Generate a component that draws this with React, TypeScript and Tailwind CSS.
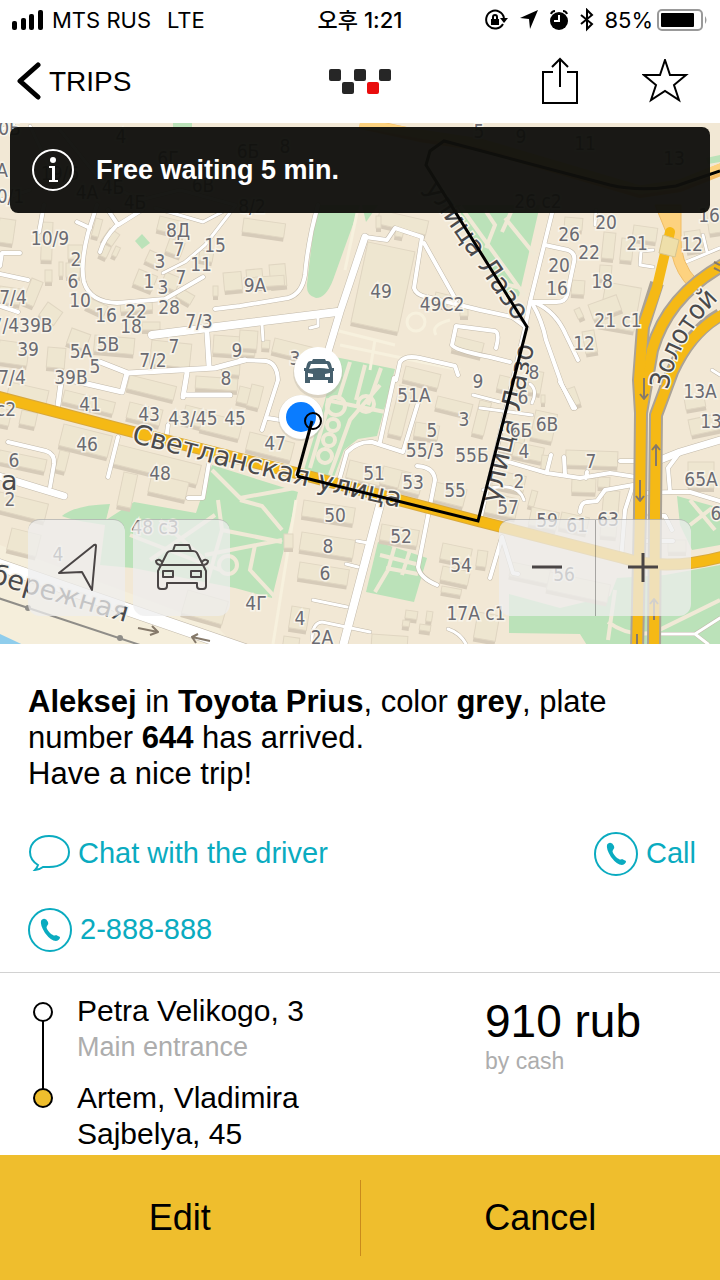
import type { ReactNode } from "react";

type Building = [x: number, y: number, w: number, h: number, angle: number];
type Road = [d: string, width: number];
type Label = [text: string, x: number, y: number];

const BUILDINGS: Building[] = [
  [0, 218, 16, 24, 8], [42, 222, 11, 38, 2], [68, 245, 16, 14, 0], [66, 263, 14, 14, 0],
  [32, 278, 12, 26, 22], [45, 270, 7, 12, 0], [59, 262, 4, 14, 0], [48, 302, 18, 16, 35],
  [0, 286, 22, 16, 8], [0, 340, 30, 22, 8], [48, 347, 18, 20, 5], [72, 328, 20, 16, 20],
  [95, 335, 40, 16, 5], [142, 322, 18, 8, 0], [110, 228, 12, 14, 35], [96, 218, 7, 18, 15],
  [104, 244, 8, 12, 25], [116, 246, 5, 10, 25], [160, 216, 28, 14, 14], [170, 238, 16, 14, 20],
  [150, 250, 16, 12, 25], [139, 269, 20, 16, 22], [166, 272, 16, 14, 22], [181, 288, 16, 10, 30],
  [120, 302, 32, 10, -4], [90, 298, 20, 10, 25], [200, 250, 14, 10, 10], [213, 286, 5, 10, 0],
  [223, 273, 18, 18, -5], [244, 218, 42, 14, 8], [246, 270, 16, 18, -5], [269, 265, 16, 22, -5],
  [244, 278, 40, 10, -4], [152, 340, 40, 24, 6], [214, 335, 42, 18, 4], [222, 364, 18, 10, 4],
  [275, 338, 50, 14, 14], [240, 330, 18, 18, 4], [262, 340, 8, 8, 4], [368, 242, 48, 82, 12],
  [380, 210, 50, 14, 13], [376, 216, 5, 12, 0], [396, 228, 8, 8, 10], [436, 292, 14, 12, 14],
  [460, 308, 8, 8, 0], [10, 382, 40, 14, 13], [65, 390, 52, 12, 14], [64, 424, 50, 22, 14],
  [60, 450, 10, 20, 14], [0, 450, 48, 12, 12], [22, 410, 16, 14, 12], [0, 408, 12, 16, 12],
  [0, 492, 50, 18, 14], [12, 528, 30, 22, 14], [116, 444, 88, 20, 14], [124, 472, 14, 34, 12],
  [152, 474, 38, 18, 13], [130, 375, 48, 14, 14], [130, 402, 34, 16, 14], [186, 405, 24, 18, 14],
  [204, 412, 40, 18, 14], [196, 376, 42, 12, 4], [240, 386, 18, 16, 14], [250, 432, 46, 18, 14],
  [252, 384, 12, 22, 14], [400, 385, 14, 50, 14], [406, 366, 36, 14, 14], [350, 460, 36, 18, 14],
  [384, 466, 28, 18, 14], [402, 472, 22, 18, 14], [436, 482, 32, 18, 14], [438, 396, 36, 12, 14],
  [416, 422, 24, 14, 10], [304, 500, 52, 16, 9], [302, 532, 54, 18, 9], [300, 562, 50, 16, 9],
  [292, 606, 18, 22, 9], [284, 534, 9, 14, 0], [382, 524, 38, 16, 10], [443, 543, 30, 16, 12],
  [443, 566, 28, 14, 12], [442, 586, 20, 6, 10], [406, 610, 12, 8, 8], [427, 611, 6, 10, 8],
  [403, 620, 7, 6, 8], [420, 624, 11, 6, 8], [372, 634, 36, 14, 4], [284, 636, 16, 14, 8],
  [565, 217, 18, 12, 5], [634, 225, 24, 14, 8], [604, 232, 12, 26, 6], [622, 238, 12, 22, 6],
  [600, 265, 12, 14, 4], [572, 280, 13, 14, 4], [606, 282, 36, 44, 10], [588, 305, 30, 16, -20],
  [574, 310, 6, 10, -25], [582, 332, 12, 22, -10], [684, 232, 16, 20, -8], [706, 210, 14, 24, -8],
  [536, 410, 22, 28, 12], [500, 430, 26, 20, 12], [515, 442, 30, 14, 12], [542, 455, 8, 14, 5],
  [495, 470, 32, 16, 12], [566, 450, 52, 15, 2], [572, 478, 24, 14, 2], [598, 477, 12, 10, 2],
  [532, 490, 6, 16, 15], [486, 492, 34, 20, 12], [532, 507, 28, 18, 12], [562, 512, 28, 16, 12],
  [604, 490, 16, 46, 5], [688, 462, 26, 26, 0], [684, 398, 20, 12, -10], [688, 420, 32, 16, -12],
  [478, 550, 10, 16, 8], [512, 562, 40, 14, 12], [550, 572, 62, 18, 12], [565, 390, 10, 18, -20],
  [500, 375, 20, 14, 14], [530, 370, 14, 22, 10], [478, 612, 22, 26, 10], [188, 590, 42, 24, 16],
  [541, 395, 4, 8, 0], [668, 540, 18, 12, 0], [455, 336, 30, 14, 14], [480, 400, 12, 34, 14],
];

const ROADS: Road[] = [
  ["M97 205L88 233Q80 265 84 282Q90 302 117 303L165 299L203 277", 4],
  ["M108 210L118 225L142 210M116 226Q104 238 100 252M77 222L90 228", 4],
  ["M155 208L203 222L222 212M236 205L205 245L185 262L163 273", 3],
  ["M44 205L39 232M0 274L28 280M20 253L2 253L0 266M0 306L18 312", 4],
  ["M0 130L14 124M30 126L60 190M60 130L100 180L140 200L180 190L235 205M0 200L30 190", 3],
  ["M152 335L240 324L337 312", 8],
  ["M215 309L240 306L288 298Q302 294 305 275Q308 240 318 205", 4],
  ["M365 237L340 312L328 352", 7],
  ["M365 237L387 240L395 228L422 237L414 288Q416 295 427 297L480 310L512 317L527 328M424 243L456 300", 4],
  ["M318 314L318 326L310 328M262 324L263 340", 3],
  ["M554 205L530 302L525 328L480 520", 4],
  ["M545 245L568 250Q576 253 574 262L567 295Q565 303 554 302L532 302", 4],
  ["M532 303Q542 320 546 340L562 385L573 408M536 303Q556 312 566 335L578 360", 4],
  ["M596 210L595 225M653 250L641 251L640 265L653 267M703 235L707 252M686 262L720 248M712 370L720 375", 3],
  ["M100 362L128 373L215 368L245 360M207 333L209 366M62 375L58 405M127 373L122 392L70 380M187 373L183 397M187 395L230 395", 5],
  ["M240 360L266 361Q277 363 278 380L262 430M268 418L280 420", 4],
  ["M396 380L400 362Q405 355 420 358L455 366L458 375M452 345L456 326L495 331Q500 333 496 348M452 345Q454 350 490 357L510 362", 4],
  ["M394 378L380 442M340 477L347 452Q358 441 372 442L403 452L418 403", 4],
  ["M417 466Q434 467 435 480L418 567Q420 578 437 585", 4],
  ["M380 505L343 646", 8],
  ["M313 600L347 607M312 640Q312 623 322 622L370 632M357 541L368 543M346 564L358 567M448 629Q460 633 466 644", 3],
  ["M8 442L46 451Q55 454 54 464L50 487M118 437L108 477M209 463L203 498L188 498M168 425L166 440", 4],
  ["M-5 475L64 496", 7],
  ["M495 458L547 473L580 478L610 473L636 477M551 455L547 471M564 457L565 474M586 478L587 472", 4],
  ["M580 512Q581 501 588 502L597 501L605 490L633 485L625 510L621 560", 4],
  ["M483 490Q518 480 524 500M480 408L532 415M530 384Q538 390 532 403M473 395L500 402", 3],
  ["M502 537L513 573L518 574M502 537L490 578M560 382L575 408", 4],
  ["M655 462L680 452L720 440", 7],
  ["M620 461L638 461M680 452L668 468L670 492L690 492L720 501M645 493L672 492M650 515L665 516L672 530M640 541L673 541", 4],
  ["M655 634L695 634L720 618M695 634L708 644", 3],
  ["M-10 562L245 650", 12],
];

const LABELS: Label[] = [
  ["10/9", 50, 245], ["8Д", 178, 237], ["7", 179, 256], ["15", 215, 252], ["3", 160, 268],
  ["11", 201, 271], ["7", 181, 284], ["1", 149, 288], ["3", 163, 294], ["2", 76, 266], ["6", 73, 288],
  ["10", 80, 307], ["16", 106, 322], ["22", 136, 318], ["18", 131, 333], ["28", 169, 314],
  ["7/3", 199, 328], ["7/4", 13, 304], ["7/439В", 22, 332], ["39", 28, 356], ["5А", 81, 358],
  ["5В", 108, 351], ["5", 95, 373], ["7", 174, 353], ["7/2", 153, 367], ["9", 237, 357],
  ["7/4", 12, 384], ["39В", 71, 384], ["8", 226, 385], ["9А", 255, 292], ["49", 381, 298],
  ["49С2", 442, 311], ["3", 295, 365], ["26", 569, 241], ["20", 606, 229], ["22", 589, 259],
  ["20", 559, 272], ["16", 557, 295], ["18", 602, 288], ["21", 637, 250], ["12", 692, 251],
  ["16", 709, 222], ["21 с1", 618, 327], ["12", 584, 350], ["8", 534, 379], ["13А", 700, 398],
  ["13", 711, 428], ["9", 478, 388], ["41", 90, 411], ["43", 149, 421], ["43/45", 193, 425],
  ["45", 235, 425], ["46", 87, 451], ["47", 275, 450], ["48", 160, 480], ["с2", 6, 416], ["6", 14, 467],
  ["2", 10, 506], ["51А", 414, 402], ["5", 432, 437], ["3", 464, 426], ["55/3", 425, 457],
  ["55Б", 472, 462], ["51", 374, 480], ["53", 413, 489], ["55", 455, 497], ["50", 335, 522],
  ["8", 328, 553], ["6", 325, 580], ["4Г", 256, 610], ["4", 300, 625], ["2А", 322, 644],
  ["52", 401, 543], ["54", 461, 572], ["17А с1", 476, 620], ["6", 523, 404], ["6Б", 521, 437],
  ["6В", 547, 431], ["4", 524, 458], ["2", 519, 488], ["57", 508, 514], ["7", 591, 468],
  ["65А", 701, 486], ["6", 716, 520], ["59", 547, 527], ["61", 577, 532], ["63", 608, 526],
  ["56", 564, 581], ["48 с3", 155, 534], ["4", 58, 561], ["4", 121, 143], ["6Г", 168, 165],
  ["6Б", 248, 158], ["8", 285, 153], ["19/6", 60, 180], ["4А", 87, 199], ["4Б", 113, 194],
  ["4Б", 135, 209], ["6В", 203, 192], ["8/2", 252, 213], ["5", 479, 138], ["9", 521, 143],
  ["11", 585, 150], ["13", 674, 165], ["26 с2", 538, 208], ["10Б", 4, 135], ["А", 2, 177], ["10/1", 5, 203],
];

const HALO = { paintOrder: "stroke" as const, stroke: "#f8f4ea", strokeWidth: 3 };

function CityMap() {
  return (
    <svg
      viewBox="0 123 720 521"
      preserveAspectRatio="xMidYMid slice"
      className="block h-[521px] w-full"
      role="img"
      aria-label="Route map"
    >
      <defs>
        <path id="svetlanskaya" d="M131 442Q260 477 420 512" />
        <path id="lazo-top" d="M424 188L530 343" />
        <path id="lazo-low" d="M499 504L540 320" />
        <path id="zolotoy" d="M668 390Q680 328 735 285" />
        <path id="naberezhnaya" d="M-46 572L160 632" />
      </defs>
      <rect y="123" width="720" height="521" fill="#f2e8d5" />

      <path d="M0 545L215 625L240 650H0Z" fill="#f5eedb" />
      <path d="M0 634L34 650H0Z" fill="#8fcdec" />

      {/* parks */}
      <g fill="#bbe2b9">
        <path d="M317 205H360L333 280Q326 298 316 298Q306 296 307 284Q312 240 317 205Z" />
        <path d="M362 205H378L366 222Z" />
        <path d="M440 205H540L519 296Q510 300 502 285L458 212Z" />
        <path d="M142 234L150 243L142 249L135 241Z" />
        <path d="M335 357L395 369L377 436L358 439L344 450L334 477L304 470L325 400Z" />
        <path d="M62 516Q75 505 110 504L106 520L134 502L196 513L212 465L298 492L272 598L235 588L133 568L100 565L105 525Q70 520 62 516Z" />
        <path d="M378 542L427 558L414 602L366 592Z" />
        <path d="M509 594L560 608L610 596L617 578L665 575L720 565V650H590L580 634L509 633Z" />
        <path d="M677 496L720 508V545L692 550L680 525Z" />
        <path d="M173 123H192V128H173ZM706 158L720 155V162L708 164Z" />
        <path d="M534 431L544 430V440ZM0 562L30 572L0 568Z" />
      </g>
      <g fill="none" stroke="#f0e9d6" strokeWidth="4">
        <path d="M458 212L490 280L520 288M485 210L495 225L486 248M505 218L535 255M460 206L525 296M512 210L502 232" />
        <path d="M326 400L395 414M350 362L338 400M365 365L356 400M381 368L368 405M310 468L330 400M330 475L350 420L380 385" />
        <path d="M212 470L240 498L295 488M218 500L222 530L282 542M222 530L205 590M240 500L262 506L282 530M205 555L282 540M255 545L250 570L275 597M130 535L220 570M150 560L215 515M160 520L205 560" />
        <path d="M395 545L388 570L375 592M386 568L418 574M410 550L402 575M380 555L420 565" />
        <path d="M608 622Q630 638 655 632L720 600M615 590L608 640M690 500L715 530M712 508L690 525" />
        <circle cx="336" cy="406" r="9" />
        <circle cx="366" cy="404" r="8" />
        <circle cx="333" cy="425" r="6" />
        <circle cx="329" cy="440" r="6" />
        <circle cx="325" cy="456" r="7" />
        <circle cx="228" cy="565" r="9" />
      </g>
      <g fill="none" stroke="#f7f1de" strokeWidth="3">
        <path d="M357 213L345 270M335 330L395 345M375 340L370 370M296 500L273 644M340 345L460 370" />
        <circle cx="416" cy="322" r="9" />
        <path d="M450 320Q430 325 436 335" />
      </g>

      {BUILDINGS.map(([x, y, w, h, angle], i) => (
        <g key={i} transform={`rotate(${angle} ${x} ${y})`}>
          <rect x={x} y={y + 4} width={w} height={h} fill="#d6cbb9" />
          <rect x={x} y={y} width={w} height={h} fill="#eee6d0" stroke="#e0d6c2" />
        </g>
      ))}

      {/* streets, casing first so that crossings stay open */}
      <g fill="none" strokeLinecap="round" strokeLinejoin="round">
        {ROADS.map(([d, width]) => (
          <path key={d} d={d} stroke="#c2b9aa" strokeWidth={width + 1} />
        ))}
        {ROADS.map(([d, width]) => (
          <path key={d} d={d} stroke="#fff" strokeWidth={width} />
        ))}
      </g>
      <path d="M-5 597L140 645" stroke="#8f8d88" strokeWidth="2" />
      <g fill="#8f8d88">
        <circle cx="28" cy="608" r="3" />
        <circle cx="120" cy="638" r="3" />
      </g>

      {/* highways */}
      <g fill="none" strokeLinejoin="round">
        <path d="M360 123L420 136L480 145L640 192L680 186L725 168" stroke="#f3b860" strokeWidth="12" />
        <path d="M360 123L420 134L480 143L640 190L680 184L725 166" stroke="#fdd27f" strokeWidth="9" />
        <path d="M655 205H681V235Q679 262 698 281L690 288Q676 274 672 255L666 232Z" fill="#fdd27f" stroke="#f0bd66" />
        <path d="M720 315Q690 332 672 372L656 415L655 513L654 650" stroke="#aaa296" strokeWidth="14" />
        <path d="M725 264Q668 295 652 350L641 413" stroke="#aaa296" strokeWidth="14" />
        <path d="M657 283L643 327L639 380L641 413L640 513L637 650" stroke="#aaa296" strokeWidth="14" />
        <path d="M-5 396L133 432L300 474L478 521L623 558Q667 572 725 556" stroke="#d8a83c" strokeWidth="12" />
        <g stroke="#f5b915" strokeWidth="10">
          <path d="M-5 396L133 432L300 474L478 521L623 558Q667 572 725 556" />
          <path d="M725 313Q690 332 672 372L656 415L655 513L654 650" />
          <path d="M725 264Q668 295 652 350L641 413" />
          <path d="M670 232L657 287L643 327L639 380L641 413L640 513L637 650" strokeLinecap="round" />
        </g>
        <path d="M663 235L679 240L675 257L659 253Z" fill="#eedfaa" stroke="#d6c48f" />
        <g stroke="#85796a" strokeWidth="2">
          <path d="M644 378V399M640 394L644 399L648 394M640 480V501M636 496L640 501L644 496M656 466V445M652 450L656 445L660 450M654 620V599M650 604L654 599L658 604M637 644V634" />
          <path d="M138 628L158 632M152 626L158 632L150 635M210 641L192 637M198 634L192 637L196 643M714 262L720 265M714 268L722 272" />
        </g>
      </g>

      <g className="font-['DejaVu_Sans',sans-serif] text-[27px]" fill="#4a4a4c">
        <text {...HALO}><textPath href="#svetlanskaya">Светланская улица</textPath></text>
        <text {...HALO}><textPath href="#lazo-top">улица Лазо</textPath></text>
        <text {...HALO}><textPath href="#lazo-low">улица Лазо</textPath></text>
        <text className="font-['DejaVu_Sans_Condensed','DejaVu_Sans',sans-serif]" {...HALO}>
          <textPath href="#zolotoy">Золотой</textPath>
        </text>
        <text {...HALO}><textPath href="#naberezhnaya">Набережная</textPath></text>
        <text x="1" y="490" {...HALO}>а</text>
      </g>
      <g
        className="font-['DejaVu_Sans_Condensed','DejaVu_Sans',sans-serif] text-[19px]"
        textAnchor="middle"
        fill="#6b6b72"
      >
        {LABELS.map(([text, x, y]) => (
          <text key={`${text}-${x}-${y}`} x={x} y={y} {...HALO}>
            {text}
          </text>
        ))}
      </g>

      {/* route and markers */}
      <path
        d="M720 171L676 186Q640 192 610 185L444 141L430 151L426 165L527 327L478 521L297 476"
        fill="none"
        stroke="#000"
        strokeWidth="3"
      />
      <circle cx="318" cy="373" r="25" fill="#b9b3a8" opacity="0.4" />
      <circle cx="318" cy="371" r="24" fill="#fff" />
      <path
        d="M313 359H325L326 361H328Q330 361 331 364L332 368H334V371H333V383H328V380H310V383H305V371H304V368H306L307 364Q308 361 310 361H312ZM311 364L309 369Q319 367 329 369L327 364ZM308 373V377H313V374ZM330 373L325 374V377H330Z"
        fill="#46606e"
        fillRule="evenodd"
      />
      <circle cx="301" cy="418" r="23" fill="#b9b3a8" opacity="0.4" />
      <circle cx="301" cy="417" r="22" fill="#fff" />
      <circle cx="301" cy="417" r="15" fill="#0a7cff" />
      <circle cx="313" cy="421" r="8" fill="none" stroke="#000" strokeWidth="2" />
      <path d="M312 421L297 476" stroke="#000" strokeWidth="3" />
    </svg>
  );
}

function StatusBar() {
  return (
    <div className="grid h-10 grid-cols-[1fr_auto_1fr] items-center px-3 font-['Inter','Noto_Sans_CJK_KR',sans-serif] text-[22px]">
      <div className="flex items-center gap-2">
        <svg width="32" height="20" viewBox="0 0 32 20" aria-hidden="true">
          <rect x="0" y="11" width="5" height="9" rx="2" />
          <rect x="9" y="8" width="5" height="12" rx="2" />
          <rect x="17" y="4" width="5" height="16" rx="2" />
          <rect x="26" y="0" width="5" height="20" rx="2" />
        </svg>
        <span>MTS RUS</span>
        <span className="ml-2">LTE</span>
      </div>
      <span className="font-medium">오후 1:21</span>
      <div className="flex items-center justify-end">
        <svg width="116" height="24" viewBox="0 0 116 24" fill="none" stroke="#000" strokeWidth="2" aria-hidden="true">
          <path d="M19 16A9 9 0 1 1 20 10" />
          <path d="M16 10H24L20 15Z" fill="#000" stroke="none" />
          <rect x="7" y="11" width="8" height="6" fill="#000" stroke="none" />
          <path d="M9 11V9A2 2 0 0 1 13 9V11" />
          <path d="M54 2L36 10L45 11L46 21Z" fill="#000" stroke="none" />
          <circle cx="75" cy="13" r="9" fill="#000" stroke="none" />
          <path d="M75 7V13H70" stroke="#fff" />
          <path d="M67 6Q68 3 71 3M79 3Q82 3 83 6" />
          <path d="M97 7L108 16L103 21V2L108 7L97 16" />
        </svg>
        <span className="mr-1 ml-1">85%</span>
        <svg width="51" height="22" viewBox="0 0 51 22" aria-hidden="true">
          <rect x="1" y="1" width="44" height="20" rx="4" fill="none" stroke="#999" strokeWidth="2" />
          <rect x="4" y="4" width="33" height="14" rx="1" />
          <path d="M48 7Q51 11 48 15Z" fill="#999" />
        </svg>
      </div>
    </div>
  );
}

function Header() {
  return (
    <header className="grid h-[83px] grid-cols-[1fr_auto_1fr] items-center px-4">
      <button className="flex items-center gap-2 text-[28px]">
        <svg width="25" height="40" viewBox="0 0 25 40" fill="none" aria-hidden="true">
          <path d="M22 3L4 19L22 35" stroke="#000" strokeWidth="5" strokeLinecap="round" strokeLinejoin="round" />
        </svg>
        TRIPS
      </button>
      <svg width="64" height="26" viewBox="0 0 64 26" fill="#262626" role="img" aria-label="Taxi">
        <rect x="1" y="0" width="12" height="12" rx="2" />
        <rect x="14" y="13" width="12" height="12" rx="2" />
        <rect x="26" y="0" width="12" height="12" rx="2" />
        <rect x="39" y="13" width="12" height="12" rx="2" fill="#e90c0c" />
        <rect x="51" y="0" width="12" height="12" rx="2" />
      </svg>
      <div className="flex items-center justify-end gap-16">
        <button aria-label="Share">
          <svg width="36" height="50" viewBox="0 0 36 50" fill="none" stroke="#000" strokeWidth="2" aria-hidden="true">
            <path d="M11 15H1V46H35V15H25M18 30V2M10 10L18 2L26 10" />
          </svg>
        </button>
        <button aria-label="Favourite" className="mr-[14px]">
          <svg width="48" height="46" viewBox="0 0 48 46" fill="none" stroke="#000" strokeWidth="2" aria-hidden="true">
            <path d="M23 1L28 16L44 16L32 26L37 41L23 32L9 41L14 26L2 16L18 16Z" />
          </svg>
        </button>
      </div>
    </header>
  );
}

function MapButton({ label, children }: { label: string; children: ReactNode }) {
  return (
    <button aria-label={label} className="flex h-24 flex-1 items-center justify-center">
      {children}
    </button>
  );
}

function MapControls() {
  return (
    <div className="absolute right-[29px] bottom-7 left-7 flex justify-between">
      <div className="flex gap-2">
        <div className="flex w-[97px] rounded-xl border-t border-black/20 bg-[#eeeeee]/75">
          <MapButton label="My location">
            <svg width="42" height="50" viewBox="0 0 42 50" fill="none" stroke="#4a4545" strokeWidth="2" aria-hidden="true">
              <path d="M38 2Q40 1 40 3L36 47L26 29L3 30Z" strokeLinejoin="round" />
            </svg>
          </MapButton>
        </div>
        <div className="flex w-[97px] rounded-xl border-t border-black/20 bg-[#eeeeee]/75">
          <MapButton label="Show taxi">
            <svg width="54" height="48" viewBox="0 0 54 48" fill="none" stroke="#4a4545" strokeWidth="2" strokeLinejoin="round" aria-hidden="true">
              <path d="M18 7L20 1H34L36 7M6 21L12 9Q13 7 16 7H38Q41 7 42 9L48 21" />
              <path d="M6 21L3 27V42Q3 45 6 45H9Q12 45 12 42V39H42V42Q42 45 45 45H48Q51 45 51 42V27L48 21Z" />
              <path d="M5 21Q1 20 1 17Q4 14 7 18M49 21Q53 20 53 17Q50 14 47 18" />
              <rect x="8" y="27" width="10" height="6" />
              <rect x="36" y="27" width="10" height="6" />
            </svg>
          </MapButton>
        </div>
      </div>
      <div className="flex w-48 rounded-xl border-t border-black/20 bg-[#eeeeee]/75">
        <MapButton label="Zoom out">
          <svg width="30" height="30" viewBox="0 0 30 30" stroke="#4a4545" strokeWidth="3" aria-hidden="true">
            <path d="M0 14H30" />
          </svg>
        </MapButton>
        <div className="w-px bg-black/30" />
        <MapButton label="Zoom in">
          <svg width="30" height="30" viewBox="0 0 30 30" stroke="#4a4545" strokeWidth="3" aria-hidden="true">
            <path d="M0 14H30M15 0V29" />
          </svg>
        </MapButton>
      </div>
    </div>
  );
}

function PhoneIcon() {
  return (
    <svg width="44" height="44" viewBox="0 0 44 44" aria-hidden="true">
      <circle cx="22" cy="22" r="21" fill="none" stroke="#0aabc0" strokeWidth="2" />
      <path
        d="M15 11Q18 10 20 14Q21 16 19 18Q18 19 19 21Q22 26 25 27Q26 28 28 27L32 29Q32 32 28 33Q23 33 17 25Q12 17 13 13Q13 12 15 11Z"
        fill="#0aabc0"
      />
    </svg>
  );
}

export default function App() {
  return (
    <div className="flex min-h-screen flex-col bg-white font-['Liberation_Sans',sans-serif] text-black">
      <StatusBar />
      <Header />

      <section className="relative">
        <CityMap />
        <div className="absolute inset-x-[10px] top-1 flex h-[86px] items-center gap-[22px] rounded-lg bg-[#10100c]/96 px-[21px] text-white">
          <svg width="43" height="44" viewBox="0 0 43 44" fill="none" stroke="#fff" strokeWidth="2" aria-hidden="true">
            <circle cx="22" cy="22" r="20" />
            <circle cx="22" cy="12" r="3" fill="#fff" stroke="none" />
            <path d="M18 18H24V32H27V34H18V32H21V20H18Z" fill="#fff" stroke="none" />
          </svg>
          <p className="text-[27px] font-bold">Free waiting 5 min.</p>
        </div>
        <MapControls />
      </section>

      <main className="flex-1">
        <section className="px-7 pt-10 pb-5">
          <p className="text-[31px] leading-9">
            <b>Aleksej</b> in <b>Toyota Prius</b>, color <b>grey</b>, plate
            <br />
            number <b>644</b> has arrived.
            <br />
            Have a nice trip!
          </p>
          <div className="mt-10 flex items-center justify-between text-[29px] text-[#0aabc0]">
            <button className="flex items-center gap-2">
              <svg width="42" height="38" viewBox="0 0 42 38" fill="none" stroke="#0aabc0" strokeWidth="2" aria-hidden="true">
                <path d="M10 30Q2 25 2 17C2 7 11 1 21 1S41 7 41 17S32 32 21 32Q17 32 15 32Q11 35 7 35Q9 33 10 30Z" />
              </svg>
              Chat with the driver
            </button>
            <a href="#call" className="-mr-1 flex items-center gap-2">
              <PhoneIcon />
              Call
            </a>
          </div>
          <a href="tel:2888888" className="mt-8 flex w-fit items-center gap-2 text-[29px] text-[#0aabc0]">
            <PhoneIcon />
            2-888-888
          </a>
        </section>

        <section className="flex border-t border-[#d2d2d2] pt-5">
          <div className="flex flex-1 items-start gap-6 pl-8">
            <svg width="21" height="116" viewBox="0 0 21 116" stroke="#000" strokeWidth="2" aria-hidden="true">
              <path d="M11 28V96" />
              <circle cx="11" cy="19" r="9" fill="#fff" />
              <circle cx="11" cy="105" r="9" fill="#efbe2d" />
            </svg>
            <div className="text-[30px] leading-9">
              <p>Petra Velikogo, 3</p>
              <p className="text-[27px] leading-9 text-[#adadad]">Main entrance</p>
              <p className="mt-[15px]">
                Artem, Vladimira
                <br />
                Sajbelya, 45
              </p>
            </div>
          </div>
          <div className="w-[235px]">
            <p className="text-[46px] leading-[56px]">910 rub</p>
            <p className="text-[23px] leading-6 text-[#adadad]">by cash</p>
          </div>
        </section>
      </main>

      <footer className="flex h-[125px] items-center bg-[#efbe2d] text-[36px]">
        <button className="h-full flex-1">Edit</button>
        <div className="h-[76px] w-px bg-[#c98a1c]" />
        <button className="h-full flex-1">Cancel</button>
      </footer>
    </div>
  );
}
